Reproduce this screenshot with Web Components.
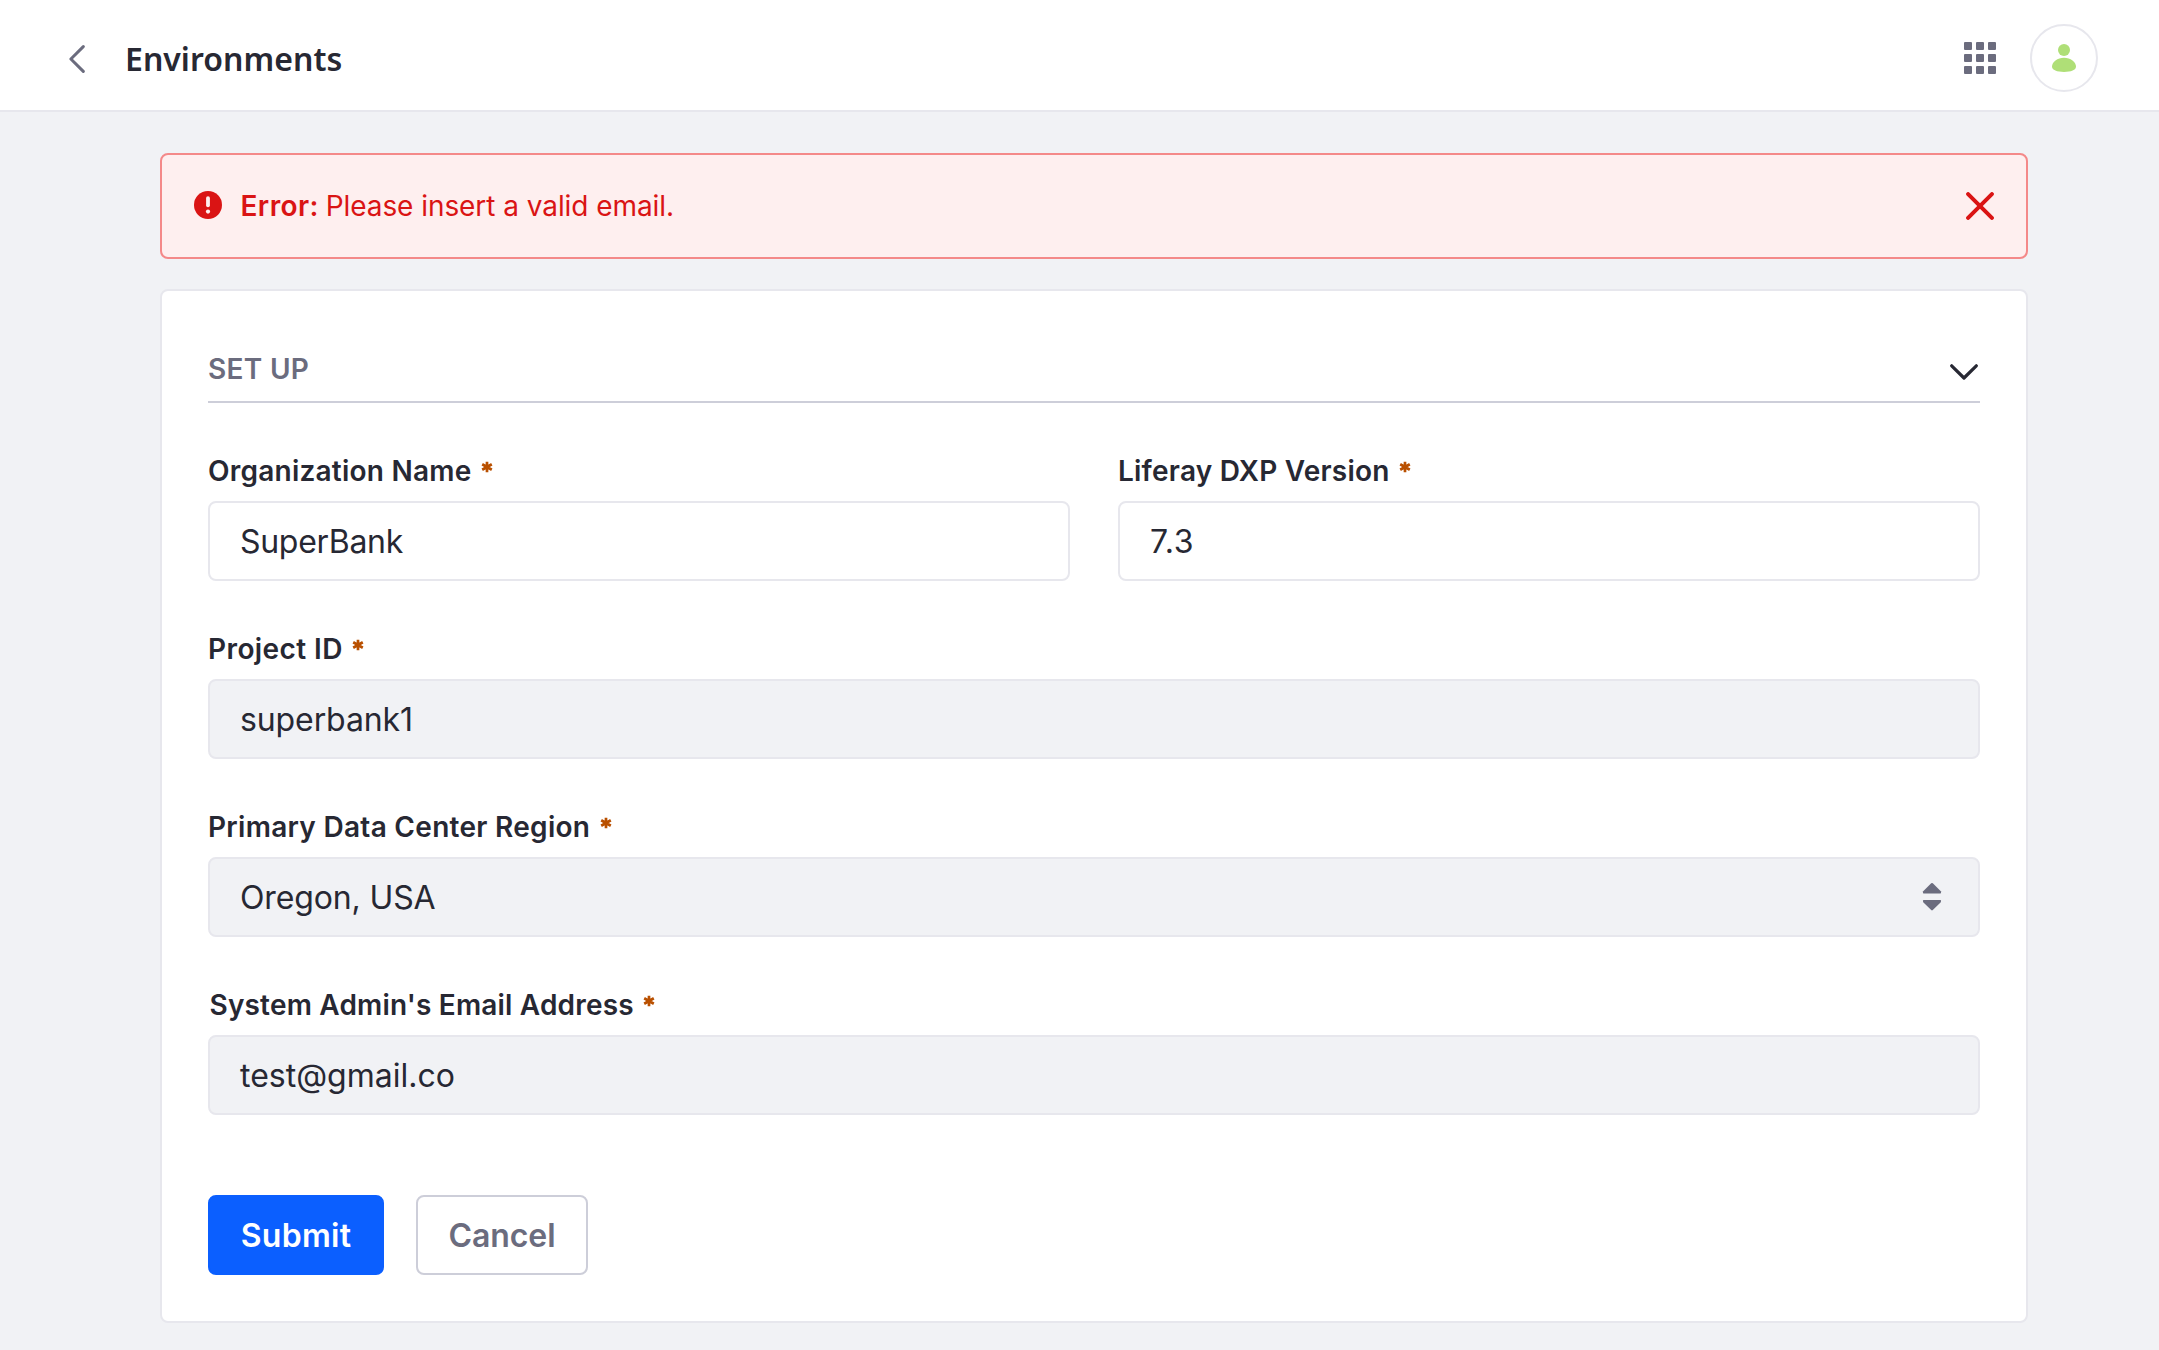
<!DOCTYPE html>
<html lang="en">
<head>
<meta charset="utf-8">
<title>Environments</title>
<style>
  body { margin: 0; min-height: 1350px; background: #f1f2f5; color: #272833; font-family: Inter, "Liberation Sans", sans-serif; }
  main { display: flex; flex-direction: column; gap: 30px; margin: 41px 131px 27px 160px; }
</style>
</head>
<body>
<app-header heading="Environments"></app-header>
<main>
  <alert-banner><strong slot="title">Error:</strong>Please insert a valid email.</alert-banner>
  <form-sheet>
    <sheet-heading slot="heading">SET UP</sheet-heading>
    <form-row>
      <form-field label="Organization Name" style="--label-spacing:.23px;--value-spacing:-.3px">SuperBank</form-field>
      <form-field label="Liferay DXP Version" style="--label-spacing:.22px;--value-spacing:.7px">7.3</form-field>
    </form-row>
    <form-row><form-field disabled label="Project ID" style="--label-spacing:.42px;--value-spacing:-.1px">superbank1</form-field></form-row>
    <form-row><form-field disabled picker label="Primary Data Center Region" style="--label-spacing:.29px;--value-spacing:-.14px">Oregon, USA</form-field></form-row>
    <form-row><form-field disabled label="System Admin's Email Address" style="--label-indent:1.5px;--label-spacing:.18px;--value-spacing:0px">test@gmail.co</form-field></form-row>
    <action-button slot="actions" primary style="width:176px;letter-spacing:.28px">Submit</action-button>
    <action-button slot="actions" style="width:172px;letter-spacing:-.1px">Cancel</action-button>
  </form-sheet>
</main>
<script>
const define = (name, markup, setup) => customElements.define(name, class extends HTMLElement {
  connectedCallback() {
    if (this.shadowRoot) return;
    const template = document.createElement('template');
    template.innerHTML = '<style>*{box-sizing:border-box}:host{box-sizing:border-box}svg{display:block;flex:none}</style>' + markup;
    this.attachShadow({ mode: 'open' }).append(template.content.cloneNode(true));
    if (setup) setup(this, this.shadowRoot);
  }
});

define('app-header', `
  <style>
    :host { display: flex; align-items: center; height: 112px; padding: 0 61px 0 69px; background: #fff; border-bottom: 2px solid #e7e7ed; }
    .back { margin-top: 8px; }
    h1 { flex: 1; margin: 8px 0 0 40px; font: 600 32px/44px "Noto Sans", sans-serif; color: #272833; letter-spacing: .03px; }
    .apps { margin: 6px 34px 0 0; }
    .avatar { display: flex; width: 68px; height: 68px; margin-top: 6px; border: 2px solid #e7e7ed; border-radius: 50%; background: #fff; }
  </style>
  <svg class="back" width="16" height="28" viewBox="0 0 16 28" fill="none" stroke="#6b6c7e" stroke-width="3" stroke-linecap="round" stroke-linejoin="round"><path d="M14.3 1.6 1.9 14 14.3 26.4"/></svg>
  <h1></h1>
  <svg class="apps" width="32" height="32" viewBox="0 0 32 32" fill="#6b6c7e">
    <rect width="8" height="8" rx="1"/><rect x="12" width="8" height="8" rx="1"/><rect x="24" width="8" height="8" rx="1"/>
    <rect y="12" width="8" height="8" rx="1"/><rect x="12" y="12" width="8" height="8" rx="1"/><rect x="24" y="12" width="8" height="8" rx="1"/>
    <rect y="24" width="8" height="8" rx="1"/><rect x="12" y="24" width="8" height="8" rx="1"/><rect x="24" y="24" width="8" height="8" rx="1"/>
  </svg>
  <span class="avatar"><svg width="64" height="64" viewBox="0 0 64 64" fill="#afdf77"><circle cx="32" cy="24" r="6"/><path d="M32 31.7C25.5 31.7 20 35.8 20 40.6 20 44.3 25 46 32 46S44 44.3 44 40.6C44 35.8 38.5 31.7 32 31.7Z"/></svg></span>
`, (host, root) => { root.querySelector('h1').textContent = host.getAttribute('heading'); });

define('alert-banner', `
  <style>
    :host { display: flex; align-items: center; justify-content: space-between; height: 106px; padding: 0 32px; border: 2px solid #f48989; border-radius: 8px; background: #feefef; color: #da1414; font-size: 28px; line-height: 36px; }
    .message { display: flex; align-items: center; gap: 18.5px; padding-bottom: 2px; }
    ::slotted(strong) { font-weight: 600; letter-spacing: .4px; margin-right: 6.8px; }
    p { margin: 0; padding-top: 2px; letter-spacing: -.06px; }
  </style>
  <div class="message">
    <svg width="28" height="28" viewBox="0 0 28 28"><circle cx="14" cy="14" r="14" fill="#da1414"/><rect x="12.1" y="5.2" width="3.8" height="11" rx="1.9" fill="#feefef"/><circle cx="14" cy="20.6" r="2.1" fill="#feefef"/></svg>
    <p><slot name="title"></slot><slot></slot></p>
  </div>
  <svg width="28" height="28" viewBox="0 0 28 28" stroke="#da1414" stroke-width="4" stroke-linecap="round"><path d="M2.1 2.1 25.9 25.9M25.9 2.1 2.1 25.9"/></svg>
`);

define('form-sheet', `
  <style>
    :host { display: block; padding: 59px 46px 46px; background: #fff; border: 2px solid #e7e7ed; border-radius: 8px; }
    .rows { display: flex; flex-direction: column; gap: 50px; margin-top: 50px; }
    .actions { display: flex; gap: 32px; margin-top: 80px; }
  </style>
  <slot name="heading"></slot>
  <div class="rows"><slot></slot></div>
  <div class="actions"><slot name="actions"></slot></div>
`);

define('sheet-heading', `
  <style>
    :host { display: flex; justify-content: space-between; height: 53px; border-bottom: 2px solid #cdced9; color: #6b6c7e; font-size: 28px; font-weight: 600; line-height: 36px; letter-spacing: .3px; }
    span { padding-top: 1px; }
    svg { margin: 13.7px 2px 0 0; }
  </style>
  <span><slot></slot></span>
  <svg width="28" height="16" viewBox="0 0 28 16" fill="none" stroke="#272833" stroke-width="3.2" stroke-linecap="round" stroke-linejoin="round"><path d="M1.7 1.8 14 14 26.3 1.8"/></svg>
`);

define('form-row', `
  <style>
    :host { display: flex; gap: 48px; }
    ::slotted(*) { flex: 1 1 0; }
  </style>
  <slot></slot>
`);

define('form-field', `
  <style>
    :host { display: flex; flex-direction: column; gap: 12px; }
    .label { display: flex; gap: 9.3px; height: 36px; padding-left: var(--label-indent, 0); font-size: 28px; font-weight: 600; line-height: 36px; letter-spacing: var(--label-spacing, 0); }
    .label svg { margin-top: 7.7px; }
    .control { display: flex; align-items: center; justify-content: space-between; height: 80px; padding: 0 36px 0 30px; border: 2px solid #e7e7ed; border-radius: 8px; background: #fff; font-size: 32px; line-height: 48px; letter-spacing: var(--value-spacing, 0); }
    .value { padding-top: 2px; }
    :host([disabled]) .control { background: #f1f2f5; }
    .sort { display: none; }
    :host([picker]) .sort { display: block; }
  </style>
  <div class="label"><span></span><svg width="12" height="12" viewBox="0 0 12 12" stroke="#b95000" stroke-width="2.7"><path d="M6 .7V11.3M1.2 3.3 10.8 8.7M10.8 3.3 1.2 8.7"/></svg></div>
  <div class="control">
    <span class="value"><slot></slot></span>
    <svg class="sort" width="20" height="30" viewBox="0 0 20 30" fill="#6b6c7e"><path d="M1.2 9.3 9.2 1.3Q10 .5 10.8 1.3L18.8 9.3Q19.6 11.5 18.4 11.5H1.6Q.4 11.5 1.2 9.3Z"/><path d="M1.2 20.3 9.2 28.1Q10 28.9 10.8 28.1L18.8 20.3Q19.6 18 18.4 18H1.6Q.4 18 1.2 20.3Z"/></svg>
  </div>
`, (host, root) => { root.querySelector('.label span').textContent = host.getAttribute('label'); });

define('action-button', `
  <style>
    :host { display: flex; align-items: center; justify-content: center; height: 80px; padding-top: 2px; border: 2px solid #cdced9; border-radius: 8px; background: #fff; color: #6b6c7e; font-size: 32px; font-weight: 600; line-height: 48px; }
    :host([primary]) { background: #0b5fff; border-color: #0b5fff; color: #fff; }
  </style>
  <slot></slot>
`);
</script>
</body>
</html>
